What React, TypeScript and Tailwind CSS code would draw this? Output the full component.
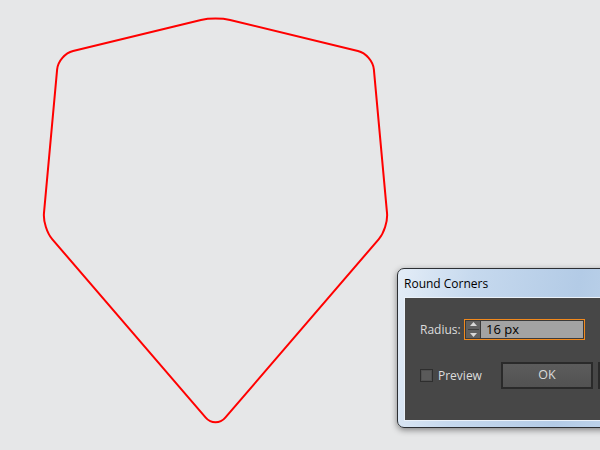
import React from "react";

type Pt = [number, number];

// shape corners, clockwise on screen
const corners: Pt[] = [
  [215.5, 16.5],
  [372.5, 54.5],
  [388.4, 228],
  [215.5, 429],
  [42.6, 228],
  [58.5, 54.5],
];

// Illustrator-style rounding: the curve leaves each edge "r" px before the corner
function roundedPath(pts: Pt[], r: number) {
  const n = pts.length;
  const k = 0.55;
  let d = "";
  pts.forEach((p, i) => {
    const prev = pts[(i - 1 + n) % n];
    const next = pts[(i + 1) % n];
    const v1 = [prev[0] - p[0], prev[1] - p[1]];
    const v2 = [next[0] - p[0], next[1] - p[1]];
    const l1 = Math.hypot(v1[0], v1[1]);
    const l2 = Math.hypot(v2[0], v2[1]);
    const a = [p[0] + (v1[0] / l1) * r, p[1] + (v1[1] / l1) * r];
    const b = [p[0] + (v2[0] / l2) * r, p[1] + (v2[1] / l2) * r];
    const c1 = [a[0] + (p[0] - a[0]) * k, a[1] + (p[1] - a[1]) * k];
    const c2 = [b[0] + (p[0] - b[0]) * k, b[1] + (p[1] - b[1]) * k];
    const f = (q: number[]) => `${q[0].toFixed(2)},${q[1].toFixed(2)}`;
    d += `${i === 0 ? "M" : "L"}${f(a)} C${f(c1)} ${f(c2)} ${f(b)} `;
  });
  return d + "Z";
}

function Shape() {
  return (
    <svg width="600" height="450" className="block">
      <path
        d={roundedPath(corners, 15)}
        fill="none"
        stroke="#ff0000"
        strokeWidth="2"
        strokeLinejoin="round"
      />
    </svg>
  );
}

function Spinner() {
  return (
    <div className="flex h-full w-[15px] shrink-0 flex-col items-center justify-center gap-[3px] border-r border-[#3a3a3a] bg-[#616161]">
      <svg width="7" height="4" viewBox="0 0 7 4">
        <path d="M3.5 0L7 4H0z" fill="#d8d8d8" />
      </svg>
      <div className="h-px w-[11px] bg-[#3e3e3e]" />
      <svg width="7" height="4" viewBox="0 0 7 4">
        <path d="M0 0h7L3.5 4z" fill="#d8d8d8" />
      </svg>
    </div>
  );
}

function RoundCornersDialog() {
  return (
    <div className="absolute left-[397px] top-[268px] flex h-[160px] w-[280px] flex-col rounded-l-[7px] border border-[#2c2f33] bg-[linear-gradient(100deg,#e4edf7_0%,#c6d9ee_25%,#b3cbe6_60%,#c9dcef_100%)] pl-[6px] pb-[6px] shadow-[0_2px_6px_rgba(0,0,0,0.45)]">
      <div className="flex h-[28px] items-center text-[12px] leading-none text-black">
        <span className="pt-[1px]">Round Corners</span>
      </div>
      <div className="flex flex-1 flex-col border border-[#eaf1f9] bg-[#474747] pl-[15px] pt-[21px] text-[12px] text-[#dcdcdc]">
        <div className="flex h-[21px] items-center">
          <span className="w-[44px] shrink-0">Radius:</span>
          <div className="h-[21px] w-[121px] shrink-0 border border-[#f2891c]">
            <div className="flex h-full items-center border border-[#3a3a3a] bg-[#a3a3a3]">
              <Spinner />
              <span className="pl-[5px] text-[13px] text-black">16 px</span>
            </div>
          </div>
        </div>
        <div className="mt-[22px] flex items-center">
          <div className="h-[13px] w-[13px] shrink-0 border border-[#2e2e2e] bg-[#5a5a5a] shadow-[inset_0_0_0_1px_#505050]" />
          <span className="ml-[5px] w-[63px] shrink-0">Preview</span>
          <button className="flex h-[27px] w-[92px] shrink-0 items-center justify-center border-2 border-[#2a2a2a] bg-[linear-gradient(#5c5c5c,#525252)] text-[12.5px] text-[#dadada]">
            OK
          </button>
          <div className="ml-[5px] h-[27px] w-[60px] shrink-0 border-2 border-[#2a2a2a] bg-[#525252]" />
        </div>
      </div>
    </div>
  );
}

export default function App() {
  return (
    <div
      className="relative h-[450px] w-[600px] overflow-hidden bg-[#e6e7e8]"
      style={{ fontFamily: '"Open Sans", "Noto Sans", sans-serif' }}
    >
      <Shape />
      <RoundCornersDialog />
    </div>
  );
}
